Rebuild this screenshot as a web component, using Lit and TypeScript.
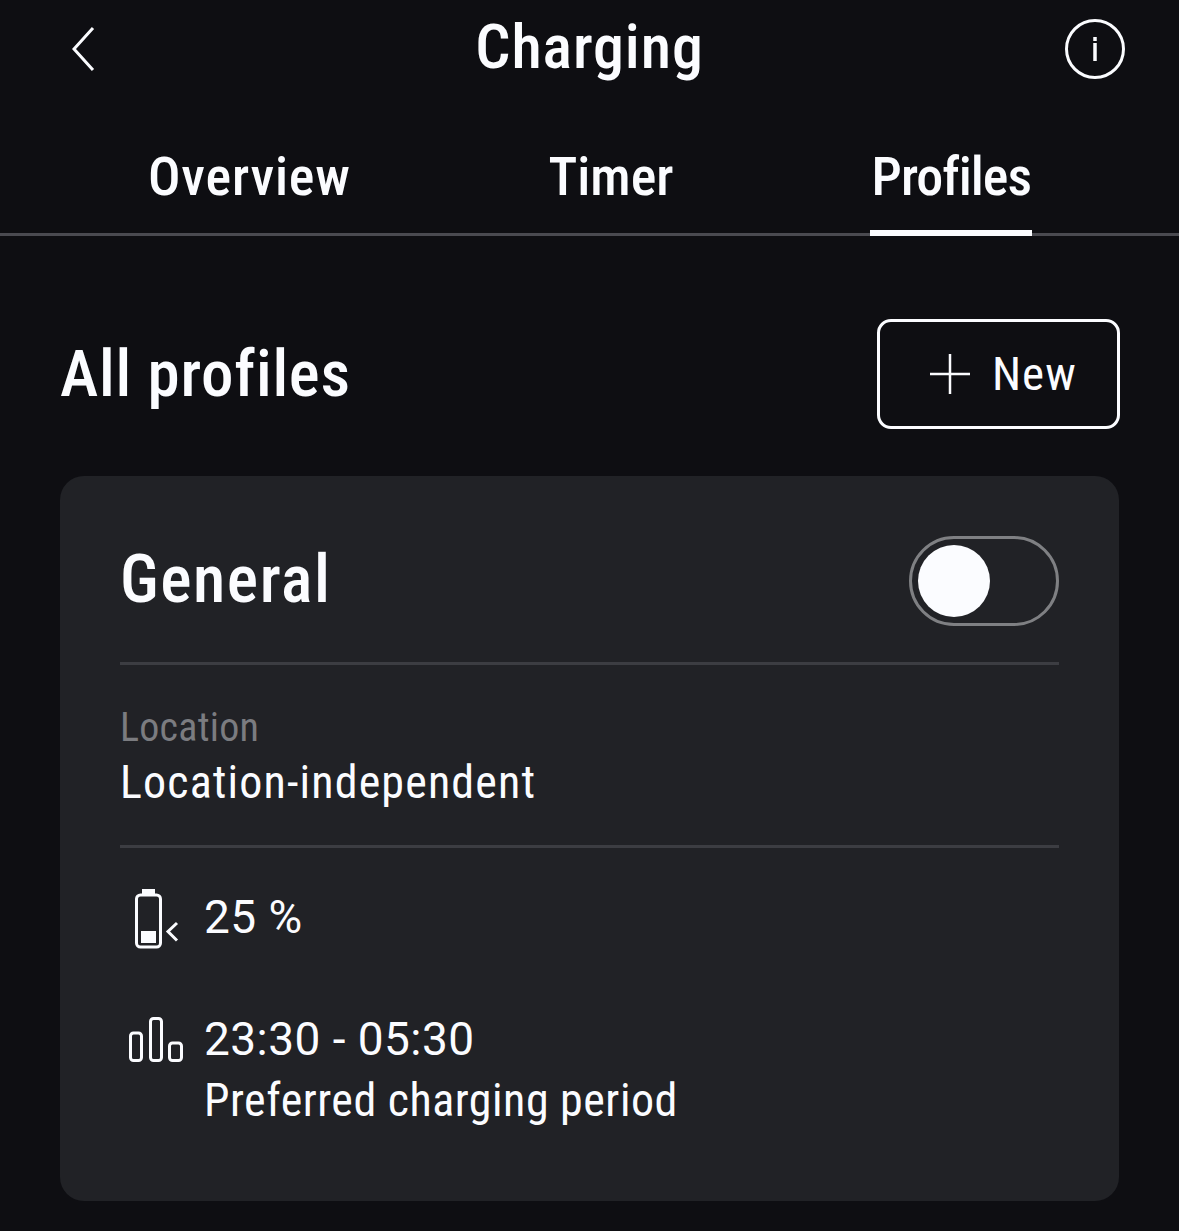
import { LitElement, html, css } from "lit";
import { customElement } from "lit/decorators.js";

@customElement("app-root")
export class AppRoot extends LitElement {
  static styles = css`
    :host { display: block; width: 1179px; height: 1231px; overflow: hidden; background: #0e0e12; color: #fbfcff; font-family: Roboto, "Liberation Sans", sans-serif; font-stretch: 78%; }
    .top { height: 98px; padding: 0 54px 0 72px; display: flex; align-items: center; justify-content: space-between; position: relative; }
    .title { position: absolute; left: 0; right: 0; top: 0; text-align: center; font-size: 62px; font-weight: 500; letter-spacing: 0.9px; line-height: 94px; }
    .tabs { height: 138px; box-sizing: border-box; border-bottom: 3px solid #4a4a50; display: flex; gap: 198px; padding-left: 148px; }
    .tab { font-size: 54px; font-weight: 500; line-height: 84px; height: 135px; box-sizing: border-box; padding-top: 37px; white-space: nowrap; }
    .ov { letter-spacing: 0.8px; }
    .tab.on { box-shadow: inset 0 -6px 0 #fbfcff; padding: 37px 1px 0 2px; height: 138px; margin-left: -2px; letter-spacing: -1px; }
    .head { display: flex; justify-content: space-between; align-items: center; padding: 83px 59px 0 60px; }
    h1 { margin: 0; font-size: 65px; font-weight: 500; letter-spacing: 0.75px; line-height: 110px; }
    .new { width: 243px; height: 110px; box-sizing: border-box; border: 3px solid #fbfcff; border-radius: 14px; display: flex; align-items: center; padding-left: 49px; gap: 21px; font-size: 47px; letter-spacing: 1px; }
    .new svg { display: block; }
    .new span { margin-bottom: 2px; }
    .card { margin: 47px 60px 0 60px; height: 725px; box-sizing: border-box; background: #212226; border-radius: 24px; padding: 60px; }
    .row1 { display: flex; justify-content: space-between; align-items: center; height: 90px; }
    h2 { margin: 0 0 3px; font-size: 66px; font-weight: 500; letter-spacing: 1.5px; }
    .toggle { width: 150px; height: 90px; box-sizing: border-box; border: 3px solid #7f8083; border-radius: 45px; padding: 6px; }
    .knob { width: 72px; height: 72px; border-radius: 50%; background: #fbfcff; }
    .rule { height: 3px; background: #3c3d42; }
    .r1 { margin-top: 36px; }
    .loc { height: 180px; box-sizing: border-box; padding-top: 35px; font-size: 46px; letter-spacing: 1.15px; line-height: 55px; }
    .label { color: #7b7c80; font-size: 40px; letter-spacing: 0.25px; }
    .info { display: grid; grid-template-columns: 84px 1fr; font-size: 46px; line-height: 61px; margin-top: 39px; letter-spacing: 0.5px; }
    .info svg { display: block; overflow: visible; }
    .num { font-stretch: 100%; letter-spacing: 0.45px; }
    .gap { height: 61px; }
  `;
  render() {
    return html`
      <div class="top">
        <svg width="24" height="46" viewBox="0 0 24 46" fill="none" stroke="#fbfcff" stroke-width="3"><path d="M21 2 2 23l19 21"/></svg>
        <div class="title">Charging</div>
        <svg width="60" height="60" viewBox="0 0 60 60" fill="none" stroke="#fbfcff" stroke-width="3"><circle cx="30" cy="30" r="28.500"/><path d="M30 24v18" stroke-width="3.500"/><path d="M30 18v4" stroke-width="3.500"/></svg>
      </div>
      <div class="tabs"><div class="tab ov">Overview</div><div class="tab">Timer</div><div class="tab on">Profiles</div></div>
      <div class="head">
        <h1>All profiles</h1>
        <div class="new">
          <svg width="42" height="42" viewBox="0 0 42 42" stroke="#fbfcff" stroke-width="2.500"><path d="M21 1v40M1 21h40"/></svg>
          <span>New</span>
        </div>
      </div>
      <div class="card">
        <div class="row1"><h2>General</h2><div class="toggle"><div class="knob"></div></div></div>
        <div class="rule r1"></div>
        <div class="loc"><div class="label">Location</div><div>Location-independent</div></div>
        <div class="rule"></div>
        <div class="info">
          <svg width="60" height="61" viewBox="0 0 60 61" fill="none" stroke="#fbfcff" stroke-width="3"><rect x="16.500" y="8" width="24" height="52" rx="4"/><path d="M22 2h13v5H22z" fill="#fbfcff" stroke="none"/><rect x="21" y="44" width="15" height="12" fill="#fbfcff" stroke="none"/><path d="M57 36 48 44.500l9 9"/></svg>
          <div class="num">25 %</div>
          <div class="gap"></div><div class="gap"></div>
          <svg width="64" height="61" viewBox="0 0 64 61" fill="none" stroke="#fbfcff" stroke-width="3"><rect x="10.500" y="24" width="11" height="27.500" rx="3"/><rect x="30.500" y="9.500" width="11" height="42" rx="3"/><rect x="49.500" y="34" width="12" height="17.500" rx="3"/></svg>
          <div><div class="num">23:30 - 05:30</div>Preferred charging period</div>
        </div>
      </div>
    `;
  }
}
